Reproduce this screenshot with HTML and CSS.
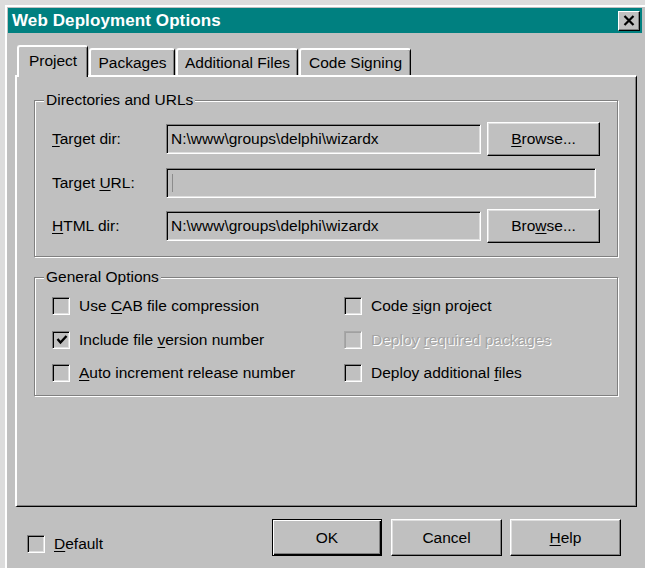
FILE: index.html
```html
<!DOCTYPE html>
<html lang="en">
<head>
<meta charset="utf-8">
<title>Web Deployment Options</title>
<link rel="stylesheet" href="styles.css">
</head>
<body>
<div class="window">
  <div class="titlebar">
    <span class="title">Web Deployment Options</span>
    <button class="close" aria-label="Close">
      <svg width="12" height="11" viewBox="0 0 12 11"><path d="M1.5 1 L10.5 10 M10.5 1 L1.5 10" stroke="#000" stroke-width="2.2" fill="none"/></svg>
    </button>
  </div>
  <div class="client">
    <div class="tabs">
      <div class="tab active t-project">Project</div>
      <div class="tab t-packages">Packages</div>
      <div class="tab t-files">Additional Files</div>
      <div class="tab t-signing">Code Signing</div>
    </div>
    <div class="panel">
      <div class="group dirs">
        <span class="legend">Directories and URLs</span>
        <div class="row">
          <span class="label"><u>T</u>arget dir:</span>
          <div class="field short">N:\www\groups\delphi\wizardx</div>
          <button class="btn browse"><u>B</u>rowse...</button>
        </div>
        <div class="row">
          <span class="label">Target <u>U</u>RL:</span>
          <div class="field long"><span class="caret"></span></div>
        </div>
        <div class="row">
          <span class="label"><u>H</u>TML dir:</span>
          <div class="field short">N:\www\groups\delphi\wizardx</div>
          <button class="btn browse">Bro<u>w</u>se...</button>
        </div>
      </div>
      <div class="group opts">
        <span class="legend">General Options</span>
        <div class="checks">
          <label class="check"><span class="box"></span><span>Use <u>C</u>AB file compression</span></label>
          <label class="check"><span class="box"><svg width="12" height="12" viewBox="0 0 12 12"><path d="M1.5 5 L4.5 8.5 L10.5 2" stroke="#000" stroke-width="2.4" fill="none"/></svg></span><span>Include file <u>v</u>ersion number</span></label>
          <label class="check"><span class="box"></span><span><u>A</u>uto increment release number</span></label>
          <label class="check"><span class="box"></span><span>Code <u>s</u>ign project</span></label>
          <label class="check disabled"><span class="box"></span><span>Deploy <u>r</u>equired packages</span></label>
          <label class="check"><span class="box"></span><span>Deploy additional <u>f</u>iles</span></label>
        </div>
      </div>
    </div>
    <div class="footer">
      <label class="check default-check"><span class="box"></span><span><u>D</u>efault</span></label>
      <div class="buttons">
        <button class="btn action ok">OK</button>
        <button class="btn action cancel">Cancel</button>
        <button class="btn action help"><u>H</u>elp</button>
      </div>
    </div>
  </div>
</div>
</body>
</html>
```

FILE: styles.css
```css
html, body {
  margin: 0;
  padding: 0;
}

body {
  width: 645px;
  height: 568px;
  overflow: hidden;
  background: #c0c0c0;
  font-family: "Liberation Sans", Arial, sans-serif;
  font-size: 15.5px;
  color: #000;
}

u {
  text-decoration: underline;
  text-underline-offset: 2px;
}

/* window frame */
.window {
  box-sizing: border-box;
  height: 568px;
  padding: 8px 3px 0 8px;
  background: #c0c0c0;
  box-shadow: inset 5px 5px 0 #dcdcdc, inset 7px 7px 0 #ffffff;
}

.titlebar {
  height: 25px;
  background: #008080;
  display: flex;
  align-items: center;
  justify-content: space-between;
  padding: 0 2px 0 4px;
}

.title {
  color: #fff;
  font-weight: bold;
  font-size: 17px;
  letter-spacing: 0.1px;
}

.close {
  width: 22px;
  height: 20px;
  padding: 0;
  margin: 0;
  box-sizing: border-box;
  background: #c0c0c0;
  border: 1px solid;
  border-color: #fff #000 #000 #fff;
  box-shadow: inset -1px -1px 0 #808080;
  display: flex;
  align-items: center;
  justify-content: center;
}

/* tab strip */
.client {
  padding: 12px 5px 0 7px;
}

.tabs {
  height: 30px;
  display: flex;
  align-items: flex-end;
  gap: 1px;
  padding-left: 2px;
}

.tab {
  box-sizing: border-box;
  height: 27px;
  border-top: 2px solid #fff;
  border-left: 2px solid #fff;
  border-right: 1px solid #000;
  box-shadow: inset -1px 0 0 #808080;
  border-radius: 3px 3px 0 0;
  display: flex;
  align-items: center;
  justify-content: center;
  padding-top: 1px;
  background: #c0c0c0;
}

.tab.active {
  position: relative;
  z-index: 2;
  height: 32px;
  margin-bottom: -2px;
  padding-bottom: 3px;
}

.t-project { width: 71px; }
.t-packages { width: 86px; }
.t-files { width: 122px; }
.t-signing { width: 112px; }

/* page panel */
.panel {
  position: relative;
  z-index: 1;
  box-sizing: border-box;
  width: 622px;
  height: 432px;
  border-top: 2px solid #fff;
  border-left: 2px solid #fff;
  border-right: 1px solid #000;
  border-bottom: 1px solid #000;
  box-shadow: inset -1px -1px 0 #808080;
  padding: 23px 0 0 17px;
}

.group {
  position: relative;
  box-sizing: border-box;
  width: 584px;
  border: 1px solid #808080;
  box-shadow: inset 1px 1px 0 #fff, 1px 1px 0 #fff;
}

.legend {
  position: absolute;
  top: -10px;
  left: 9px;
  padding: 0 2px;
  line-height: 18px;
  background: #c0c0c0;
}

.dirs {
  padding: 21px 0 13px 17px;
  display: flex;
  flex-direction: column;
  gap: 9.5px;
}

.row {
  height: 34px;
  display: flex;
  align-items: center;
}

.label {
  width: 114px;
}

.field {
  box-sizing: border-box;
  height: 30px;
  border: 1px solid;
  border-color: #808080 #fff #fff #808080;
  box-shadow: inset 1px 1px 0 #000, inset -1px -1px 0 #dfdfdf;
  padding: 0 0 0 4px;
  display: flex;
  align-items: center;
  white-space: nowrap;
}

.field.short { width: 315px; }
.field.long { width: 430px; }

.caret {
  display: block;
  width: 1px;
  height: 18px;
  margin-left: 1px;
  background: #8c8c8c;
}

.btn {
  font: inherit;
  color: #000;
  background: #c0c0c0;
  box-sizing: border-box;
  border: 1px solid;
  border-color: #fff #000 #000 #fff;
  box-shadow: inset -1px -1px 0 #808080, inset 1px 1px 0 #dfdfdf;
  padding: 0;
  margin: 0;
}

.browse {
  width: 113px;
  height: 34px;
  margin-left: 6px;
}

/* options */
.opts {
  margin-top: 20px;
  padding: 19px 0 13px 17px;
}

.checks {
  display: grid;
  grid-template-columns: 292px 1fr;
  grid-template-rows: repeat(3, 18px);
  grid-auto-flow: column;
  row-gap: 15.5px;
}

.check {
  display: flex;
  align-items: center;
  gap: 9px;
  white-space: nowrap;
}

.box {
  box-sizing: border-box;
  width: 18px;
  height: 18px;
  flex: none;
  border: 1px solid;
  border-color: #808080 #fff #fff #808080;
  box-shadow: inset 1px 1px 0 #000, inset -1px -1px 0 #dfdfdf;
  display: flex;
  align-items: center;
  justify-content: center;
  padding: 1px 0 0 1px;
}

.check.disabled {
  color: #a4a4a4;
  text-shadow: 1px 1px 0 #fff;
}

.check.disabled .box {
  box-shadow: inset 1px 1px 0 #a0a0a0, inset -1px -1px 0 #dfdfdf;
  border-color: #a8a8a8 #fff #fff #a8a8a8;
}

/* bottom bar */
.footer {
  margin-top: 12px;
  height: 37px;
  display: flex;
  align-items: flex-end;
}

.default-check {
  margin: 0 0 3px 12px;
}

.buttons {
  margin-left: auto;
  margin-right: 16px;
  display: flex;
  height: 37px;
}

.action {
  width: 111px;
  height: 37px;
}

.ok {
  width: 110px;
  border-color: #000;
  box-shadow: inset 1px 1px 0 #fff, inset -1px -1px 0 #000, inset -2px -2px 0 #808080;
}

.cancel { margin-left: 9px; }
.help { margin-left: 8px; }
```
